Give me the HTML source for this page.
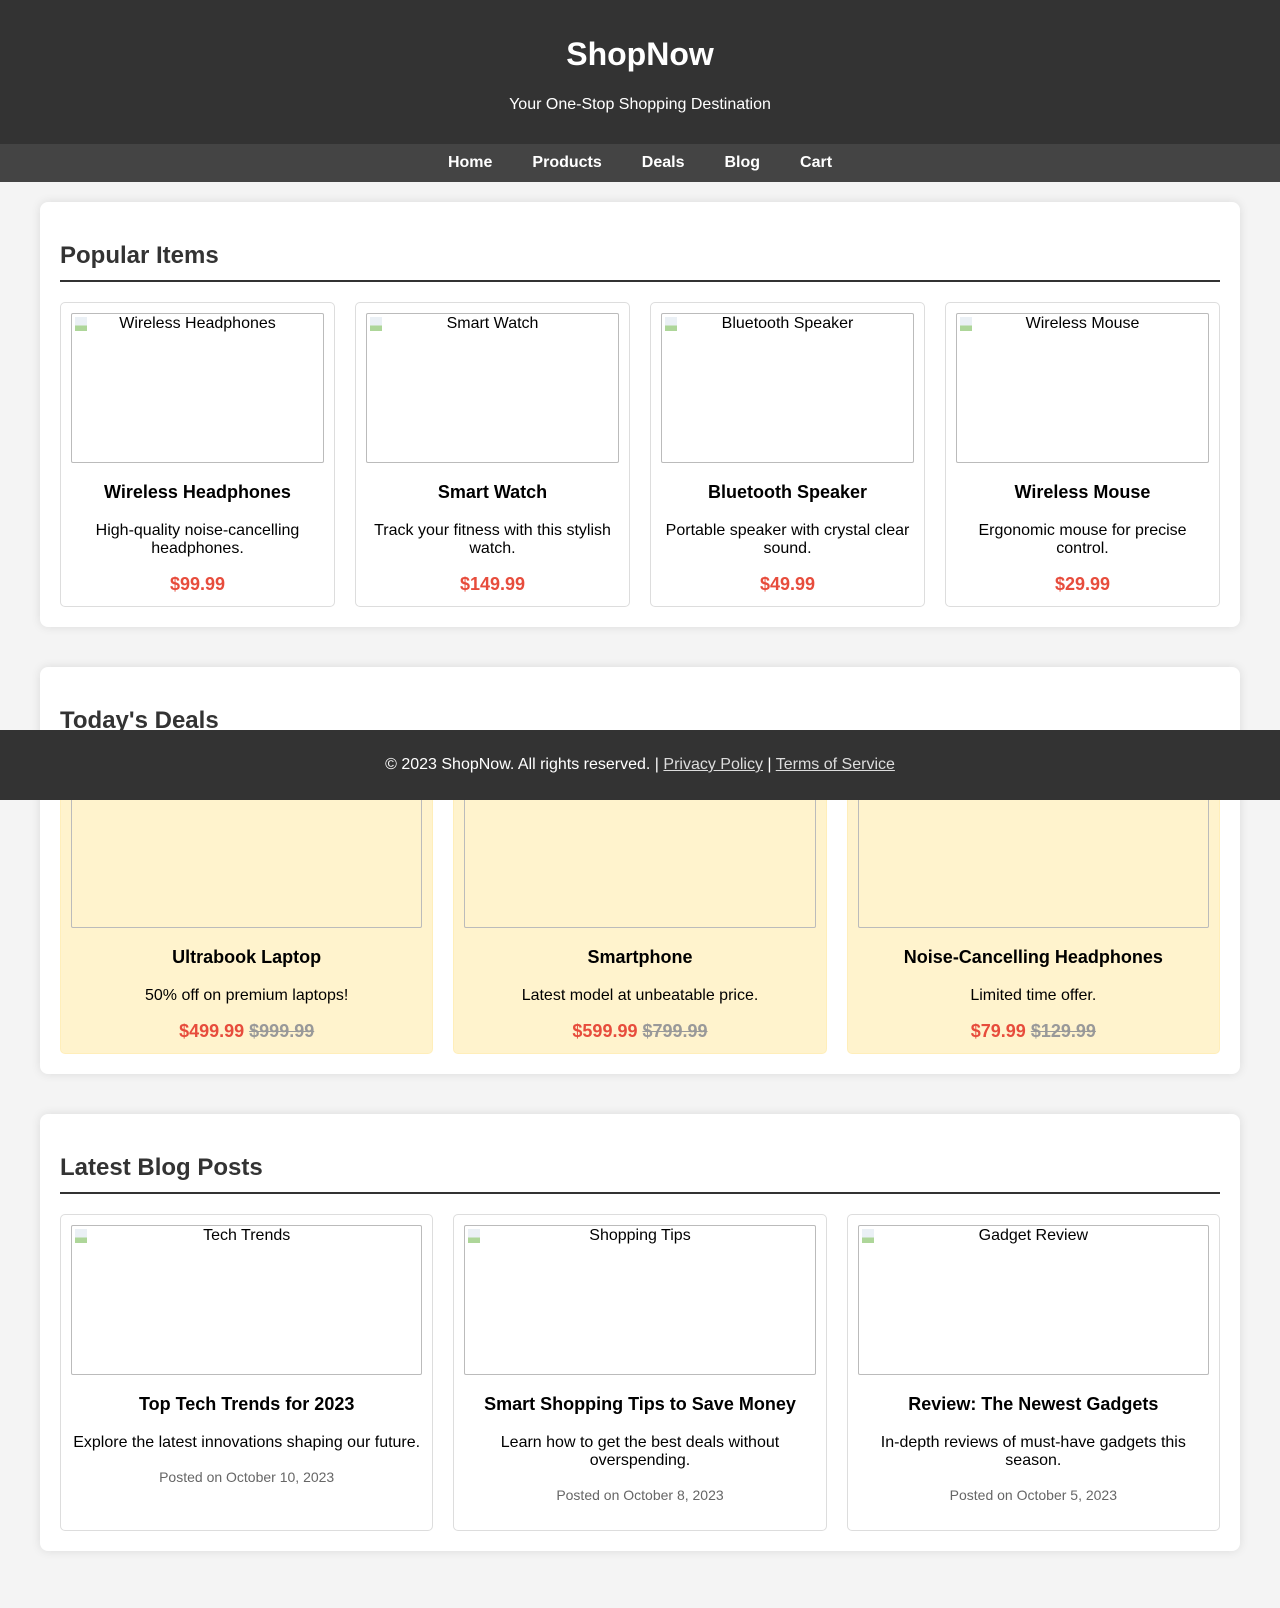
<!DOCTYPE html>
<html><head><meta charset="utf-8"><style>
*{box-sizing:border-box}
body{margin:0;background:#f4f4f4;font-family:"Liberation Sans",Arial,sans-serif;color:#333;position:relative;min-height:1608px}
header{background:#333;color:#fff;text-align:center;padding:20px 0;height:144px}
header h1{margin:12px 0 0;font-size:32px;line-height:44px}
header p{margin:20px 0 0;font-size:16px}
nav{background:#444;height:38px;text-align:center;line-height:38px}
nav a{color:#fff;font-weight:bold;text-decoration:none;margin:0 20px;font-size:16px}
main{padding:20px 40px 0}
section{background:#fff;border-radius:8px;box-shadow:0 0 10px rgba(0,0,0,.1);padding:20px;margin-bottom:40px}
h2{margin:20px 0 20px;font-size:24px;line-height:28px;padding-bottom:10px;border-bottom:2px solid #333;color:#333}
.g4{display:grid;grid-template-columns:repeat(4,1fr);gap:20px}
.g3{display:grid;grid-template-columns:repeat(3,1fr);gap:20px}
.card{border:1px solid #ddd;border-radius:5px;padding:10px;text-align:center;color:#000}
.deal{background:#fff3cd;border-color:#ffeeba}
.img{height:150px;border:1px solid #bbb;border-radius:2px;text-align:center;font-size:16px;line-height:20px;position:relative}
.img:before{content:"";position:absolute;left:3px;top:3px;width:12px;height:14px;background:linear-gradient(#dde6ee 60%,#7b5 60%);opacity:.6}
.card h3{font-size:18px;margin:18px 0 19px;line-height:22px}
.card p{margin:16px 0;font-size:16px;line-height:18px}
.price{color:#e74c3c;font-weight:bold;font-size:18px!important;margin:17px 0 3px!important}
.old{color:#999;text-decoration:line-through}
.date{color:#666;font-size:14px!important}
footer{position:absolute;top:730px;left:0;right:0;height:70px;background:#333;color:#fff;text-align:center;line-height:70px;font-size:16px}
footer a{color:#ddd}
</style></head><body>
<header><h1>ShopNow</h1><p>Your One-Stop Shopping Destination</p></header>
<nav><a>Home</a><a>Products</a><a>Deals</a><a>Blog</a><a>Cart</a></nav>
<main>
<section><h2>Popular Items</h2><div class="g4">
<div class="card"><div class="img">Wireless Headphones</div><h3>Wireless Headphones</h3><p>High-quality noise-cancelling headphones.</p><p class="price">$99.99</p></div>
<div class="card"><div class="img">Smart Watch</div><h3>Smart Watch</h3><p>Track your fitness with this stylish watch.</p><p class="price">$149.99</p></div>
<div class="card"><div class="img">Bluetooth Speaker</div><h3>Bluetooth Speaker</h3><p>Portable speaker with crystal clear sound.</p><p class="price">$49.99</p></div>
<div class="card"><div class="img">Wireless Mouse</div><h3>Wireless Mouse</h3><p>Ergonomic mouse for precise control.</p><p class="price">$29.99</p></div>
</div></section>
<section><h2>Today's Deals</h2><div class="g3">
<div class="card deal"><div class="img">Ultrabook Laptop</div><h3>Ultrabook Laptop</h3><p>50% off on premium laptops!</p><p class="price">$499.99 <span class="old">$999.99</span></p></div>
<div class="card deal"><div class="img">Smartphone</div><h3>Smartphone</h3><p>Latest model at unbeatable price.</p><p class="price">$599.99 <span class="old">$799.99</span></p></div>
<div class="card deal"><div class="img">Noise-Cancelling Headphones</div><h3>Noise-Cancelling Headphones</h3><p>Limited time offer.</p><p class="price">$79.99 <span class="old">$129.99</span></p></div>
</div></section>
<section><h2>Latest Blog Posts</h2><div class="g3">
<div class="card"><div class="img">Tech Trends</div><h3>Top Tech Trends for 2023</h3><p>Explore the latest innovations shaping our future.</p><p class="date">Posted on October 10, 2023</p></div>
<div class="card"><div class="img">Shopping Tips</div><h3>Smart Shopping Tips to Save Money</h3><p>Learn how to get the best deals without overspending.</p><p class="date">Posted on October 8, 2023</p></div>
<div class="card"><div class="img">Gadget Review</div><h3>Review: The Newest Gadgets</h3><p>In-depth reviews of must-have gadgets this season.</p><p class="date">Posted on October 5, 2023</p></div>
</div></section>
</main>
<footer>© 2023 ShopNow. All rights reserved. | <a href="#">Privacy Policy</a> | <a href="#">Terms of Service</a></footer>
</body></html>
